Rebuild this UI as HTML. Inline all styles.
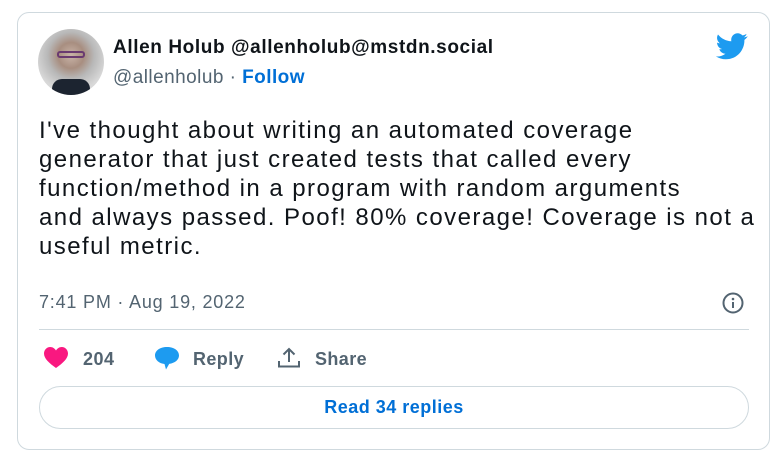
<!DOCTYPE html>
<html><head><style>
body{margin:0;width:779px;height:461px;background:#fff;font-family:"Liberation Sans",sans-serif;position:relative;overflow:hidden}
.card{position:absolute;left:17px;top:12px;width:753px;height:438px;border:1px solid #cfd9de;border-radius:12px;box-sizing:border-box}
.a{position:absolute;white-space:nowrap}
</style></head><body>
<div class="card"></div>
<div class="a" style="left:38px;top:29px;width:66px;height:66px;border-radius:50%;background:radial-gradient(circle at 50% 40%,#c9b4a8 0,#a88e80 25%,#b8b8b8 45%,#d8d8d8 70%);overflow:hidden">
<div class="a" style="left:14px;top:50px;width:38px;height:20px;background:#1c2430;border-radius:10px 10px 0 0"></div>
<div class="a" style="left:19px;top:22px;width:28px;height:7px;border:2px solid #6a3a70;border-radius:3px;box-sizing:border-box"></div>
</div>
<div class="a" style="left:113px;top:37px;font-size:19px;letter-spacing:0.6px;font-weight:bold;color:#0f1419">Allen Holub @allenholub@mstdn.social</div>
<div class="a" style="left:113px;top:67px;font-size:19px;letter-spacing:0.45px;color:#536471">@allenholub · <b style="color:#006fd6">Follow</b></div>
<svg class="a" style="left:716px;top:33px" width="32" height="27" viewBox="0 0 24 20"><path fill="#1d9bf0" d="M23.6 2.4c-.9.4-1.8.6-2.8.8 1-.6 1.8-1.5 2.1-2.7-.9.6-2 1-3.1 1.2C18.9.7 17.6.1 16.3.1c-2.7 0-4.9 2.2-4.9 4.9 0 .4 0 .8.1 1.1C7.5 5.9 3.9 4 1.5 1 1.1 1.7.8 2.6.8 3.5c0 1.7.9 3.2 2.2 4.1-.8 0-1.600-.2-2.2-.6v.1c0 2.4 1.7 4.4 3.9 4.8-.4.1-.8.2-1.3.2-.3 0-.6 0-.9-.1.6 2 2.4 3.4 4.6 3.4-1.7 1.3-3.8 2.1-6.1 2.1-.4 0-.8 0-1.2-.1 2.2 1.4 4.8 2.2 7.5 2.2 9.1 0 14-7.5 14-14v-.6c1-.7 1.8-1.6 2.5-2.6z"/></svg>
<div class="a" style="left:39px;top:116px;width:735px;font-size:24px;letter-spacing:1.45px;line-height:29px;color:#0f1419">I've thought about writing an automated coverage<br>generator that just created tests that called every<br>function/method in a program with random arguments<br>and always passed. Poof! 80% coverage! Coverage is not a<br>useful metric.</div>
<div class="a" style="left:39px;top:292px;font-size:18px;letter-spacing:0.8px;color:#536471">7:41 PM · Aug 19, 2022</div>
<svg class="a" style="left:721px;top:291px" width="24" height="24" viewBox="0 0 24 24"><circle cx="12" cy="12" r="9.5" fill="none" stroke="#536471" stroke-width="2"/><circle cx="12" cy="8" r="1.3" fill="#536471"/><path d="M12 11v6" stroke="#536471" stroke-width="2"/></svg>
<div class="a" style="left:39px;top:329px;width:710px;height:1px;background:#cfd9de"></div>
<svg class="a" style="left:44px;top:347px" width="24" height="22" viewBox="0 0 24 22"><path fill="#f91880" d="M12 21C5 16 0 11.5 0 6.5 0 3 2.7 0 6.2 0 8.6 0 10.8 1.4 12 3.5 13.2 1.4 15.4 0 17.8 0 21.3 0 24 3 24 6.5 24 11.5 19 16 12 21z"/></svg>
<div class="a" style="left:83px;top:349px;font-size:18px;letter-spacing:0.5px;font-weight:bold;color:#536471">204</div>
<svg class="a" style="left:154px;top:346px" width="26" height="25" viewBox="0 0 26 25"><path fill="#1d9bf0" d="M13 1C6 1 1 4.5 1 9.5c0 4.5 4.2 8 9.5 8.5l1.5 5.5 3.2-5.6C21 17 25 13.8 25 9.5 25 4.5 20 1 13 1z"/></svg>
<div class="a" style="left:193px;top:349px;font-size:18px;letter-spacing:0.4px;font-weight:bold;color:#536471">Reply</div>
<svg class="a" style="left:277px;top:346px" width="24" height="24" viewBox="0 0 24 24"><path d="M12 3v13M6.5 8.5 12 3l5.5 5.5M2 15v5.5h20V15" fill="none" stroke="#536471" stroke-width="2"/></svg>
<div class="a" style="left:315px;top:349px;font-size:18px;letter-spacing:0.4px;font-weight:bold;color:#536471">Share</div>
<div class="a" style="left:39px;top:386px;width:710px;height:43px;border:1px solid #cfd9de;border-radius:22px;box-sizing:border-box;text-align:center;line-height:41px;font-size:18px;letter-spacing:0.5px;font-weight:bold;color:#006fd6">Read 34 replies</div>
</body></html>
